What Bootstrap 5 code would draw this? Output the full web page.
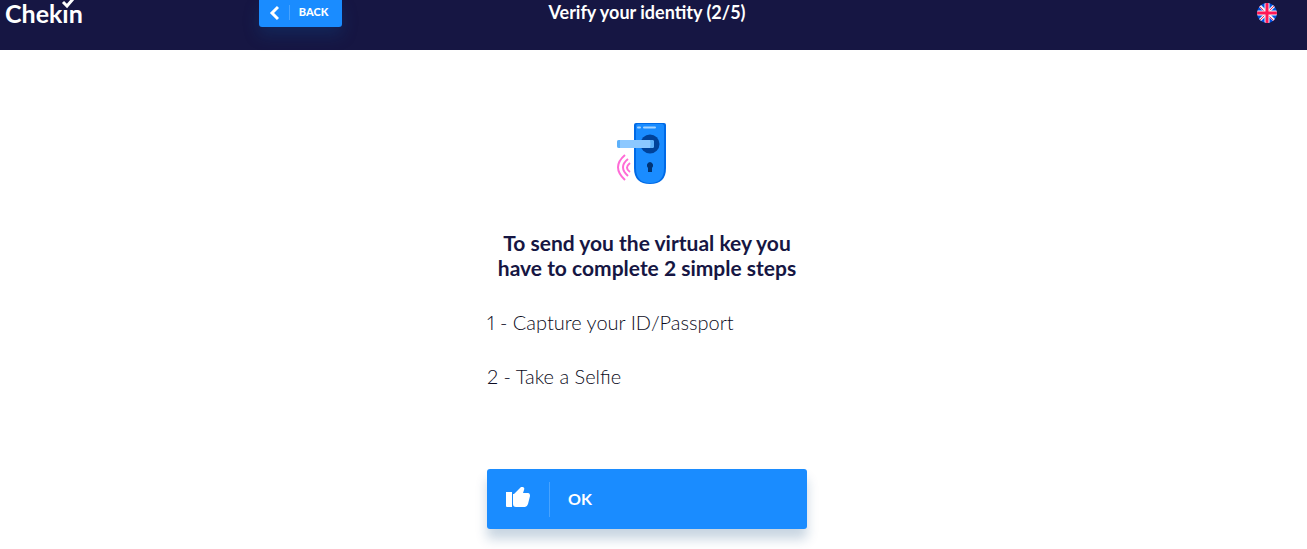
<!DOCTYPE html>
<html lang="en">
<head>
<meta charset="utf-8">
<meta name="viewport" content="width=device-width, initial-scale=1">
<title>Chekin – Verify your identity</title>
<link href="https://cdn.jsdelivr.net/npm/bootstrap@5.3.0/dist/css/bootstrap.min.css" rel="stylesheet">
<style>
  :root { --navy: #161643; --blue: #1a8cff; }
  body { font-family: Lato, "Liberation Sans", sans-serif; color: var(--navy); padding-right: 13px; }
  .topbar { background: var(--navy); height: 50px; margin-right: -13px; padding-right: 13px; }
  .side { width: 20%; }
  .middle { display: grid; grid-template-columns: 1fr auto 1fr; }
  .brand { font-size: 25px; line-height: 26px; font-weight: 700; padding-left: 5px; }
  .brand svg { position: absolute; left: 59px; top: 0; }
  .title { font: 700 18px/25px Lato, sans-serif; }
  .btn-blue { background: var(--blue); color: #fff; font-weight: 700; border: 0; }
  .btn-blue:hover { background: #1680ea; color: #fff; }
  .back { width: 83px; height: 27px; padding: 0 0 2px 10px; font-size: 11px; font-weight: 900; border-radius: 0 0 3px 3px; box-shadow: 0 8px 16px #0c4c8c4d; }
  .rule { width: 1px; background: #47a3ff; }
  .back .rule { height: 15px; margin: 0 9px 0 10px; }
  .flag { width: 20px; height: 20px; margin: 3px 17px 0 0; }
  .panel { width: 320px; padding: 73px 0 20px; }
  .lock { margin-left: 129px; }
  .heading { font-size: 21px; line-height: 25px; font-weight: 700; margin: 45px 0 28px; }
  .step { color: #0b0b22; font-size: 20px; line-height: 28px; font-weight: 300; margin-bottom: 26px; font-variant-numeric: proportional-nums; }
  .ok { height: 60px; margin-top: 79px; padding: 0 18px; font-size: 16px; border-radius: 3px; box-shadow: 0 10px 12px #10487f3b; }
  .ok .rule { height: 35px; margin: 0 18px; }
</style>
</head>
<body>
<header class="topbar d-flex align-items-start text-white">
  <div class="side"><a href="#" class="brand position-relative d-inline-block text-white text-decoration-none">Chekın<svg width="18" height="9" viewBox="0 0 18 9" fill="none" stroke="#fff" stroke-width="3" aria-hidden="true"><path d="M4 2l4 4L14-1"/></svg></a></div>
  <div class="middle flex-grow-1">
    <div><button type="button" class="btn btn-blue back d-flex align-items-center"><svg width="10" height="16" viewBox="0 0 10 16" fill="none" stroke="#fff" stroke-width="3" aria-hidden="true"><path d="M9 2L3 8l6 6"/></svg><span class="rule"></span>BACK</button></div>
    <h1 class="title m-0">Verify your identity (2/5)</h1>
  </div>
  <div class="side d-flex justify-content-end">
    <button type="button" class="btn p-0 border-0 flag d-flex" aria-label="Language: English">
      <svg width="20" height="20" viewBox="0 0 20 20"><defs><clipPath id="disc"><circle cx="10" cy="10" r="10"/></clipPath></defs><g clip-path="url(#disc)"><path fill="#0052e0" d="M0 0h20v20H0z"/><path stroke="#f0f0f5" stroke-width="3" d="M0 0l20 20M20 0L0 20"/><path stroke="#f5265f" stroke-width="1" d="M1 2l18 18M19 1L1 19"/><path stroke="#f0f0f5" stroke-width="5" d="M10 0v20M0 10h20"/><path stroke="#ff1654" stroke-width="3" d="M10 0v20M0 10h20"/></g></svg>
    </button>
  </div>
</header>
<main class="panel mx-auto">
  <svg class="lock d-block" width="50" height="62" viewBox="0 0 50 62" role="img" aria-label="Smart lock">
    <path fill="#006ae6" d="M18 2q0-2 2-2h28q2 0 2 2v43q0 16-16 16T18 45z"/>
    <path fill="#1a8cff" d="M20 3q0-2 2-2h24q2 0 2 2v42q0 15-14 15T20 45z"/>
    <path stroke="#a5d4ff" stroke-width="2" stroke-linecap="round" d="M22 4.500h2M28 4.500h11"/>
    <circle cx="34" cy="21" r="9.500" fill="#00429a"/>
    <rect x="1" y="17" width="37" height="8" rx="2" fill="#8cc8ff"/>
    <path fill="#5cb0fa" d="M3 17h1v8H3q-2 0-2-2v-4q0-2 2-2zM34 17h2q2 0 2 2v4q0 2-2 2h-2q1-4 0-8z"/>
    <path fill="#003374" d="M34 39a3.500 3.500 0 0 1 2 6v4h-4v-4a3.500 3.500 0 0 1 2-6z"/>
    <g fill="none" stroke="#ff6bd6" stroke-width="2"><path d="M9 32q-14 12 0 25M12 36q-10 8 0 17M14 40q-6 5 0 9"/></g>
  </svg>
  <h2 class="heading text-center">To send you the virtual key you have to complete 2 simple steps</h2>
  <p class="step">1 - Capture your ID/Passport</p>
  <p class="step">2 - Take a Selfie</p>
  <button type="button" class="btn btn-blue ok w-100 d-flex align-items-center">
    <svg width="26" height="24" viewBox="0 0 26 24" fill="#fff" aria-hidden="true"><path d="M1 5h6v15H2q-1 0-1-1zM9 7l7-7q1-1 2 0 2 1 1 3l-1 3h5q2 0 2 3l-2 8q-1 3-3 3h-9q-3 0-3-3V7z"/></svg>
    <span class="rule"></span>OK
  </button>
</main>
<script src="https://cdn.jsdelivr.net/npm/bootstrap@5.3.0/dist/js/bootstrap.bundle.min.js"></script>
</body>
</html>
